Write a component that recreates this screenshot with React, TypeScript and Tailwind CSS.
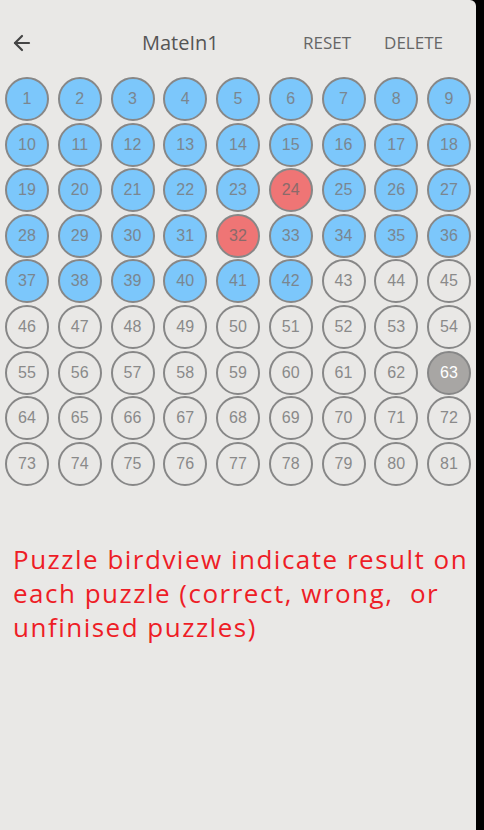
import { ArrowLeft } from "lucide-react";

type Status = "correct" | "wrong" | "current" | "open";

const WRONG = [24, 32];
const CURRENT = 63;
const SOLVED_UP_TO = 42;

function statusOf(n: number): Status {
  if (WRONG.includes(n)) return "wrong";
  if (n === CURRENT) return "current";
  if (n <= SOLVED_UP_TO) return "correct";
  return "open";
}

const FILL: Record<Status, string> = {
  correct: "bg-[#7cc7fb] text-[#7a8690]",
  wrong: "bg-[#ef7575] text-[#8a6a6a]",
  current: "bg-[#a8a6a4] text-white",
  open: "bg-transparent text-[#8a8a8a]",
};

export default function App() {
  const puzzles = Array.from({ length: 81 }, (_, i) => i + 1);

  return (
    <div className="flex h-[830px] w-[484px] bg-black">
      <div className="flex h-full w-[476px] flex-col rounded-tr-[6px] bg-[#e9e8e6] font-['Open_Sans',sans-serif]">
        <header className="flex h-[54px] items-center pt-[32px] pb-0">
          <button type="button" className="ml-[10px] text-[#454545]">
            <ArrowLeft className="h-[24px] w-[24px]" strokeWidth={2.2} />
          </button>
          <h1 className="ml-[108px] text-[20px] text-[#555]">MateIn1</h1>
          <div className="ml-auto mr-[33px] flex gap-[33px] text-[17px] text-[#666]">
            <button type="button">RESET</button>
            <button type="button">DELETE</button>
          </div>
        </header>

        <div className="mt-[23px] grid grid-cols-[repeat(9,44px)] gap-x-[8.75px] gap-y-[1.6px] pl-[5px]">
          {puzzles.map((n) => (
            <div
              key={n}
              className={`flex h-[44px] w-[44px] items-center justify-center rounded-full border-[2.5px] border-[#878787] font-['Liberation_Sans',sans-serif] text-[16px] ${FILL[statusOf(n)]}`}
            >
              {n}
            </div>
          ))}
        </div>

        <p className="mt-[56px] whitespace-nowrap pl-[13px] text-[26px] leading-[34px] tracking-[1.5px] text-[#ee1d26]">
          Puzzle birdview indicate result on
          <br />
          each puzzle (correct, wrong,&nbsp; or
          <br />
          unfinised puzzles)
        </p>
      </div>
    </div>
  );
}
